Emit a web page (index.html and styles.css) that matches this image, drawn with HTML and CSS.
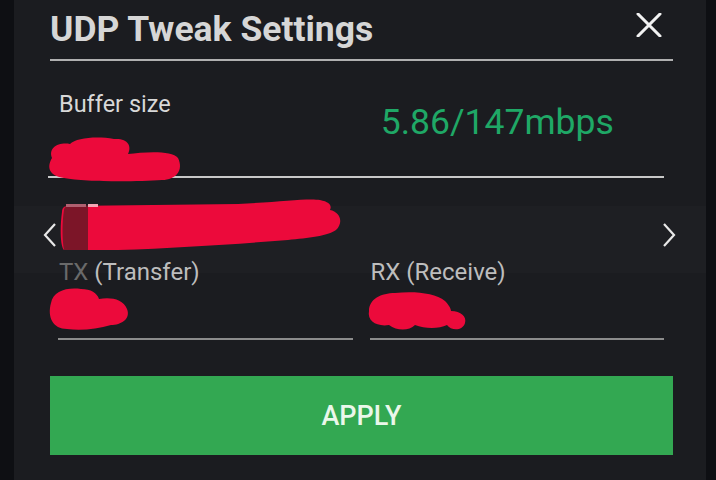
FILE: index.html
```html
<!DOCTYPE html>
<html>
<head>
<meta charset="utf-8">
<link rel="stylesheet" href="styles.css">
</head>
<body>
<div class="dialog">
  <header class="head">
    <h1 class="title">UDP Tweak Settings</h1>
    <svg class="close" width="26" height="24" viewBox="0 0 26 24"><path d="M2 1 L24 23 M24 1 L2 23" stroke="#f2f2f2" stroke-width="3" stroke-linecap="round"/></svg>
  </header>
  <div class="divider"></div>

  <section class="buffer">
    <div class="buffer-top">
      <span class="label">Buffer size</span>
      <span class="speed">5.86/147mbps</span>
    </div>
    <div class="line"></div>
    <svg class="scribble s1" width="140" height="48" viewBox="0 0 140 48"><path d="M8 22 C4 12 14 6 26 8 C32 2 52 0 70 3 C84 2 88 10 84 18 C100 16 128 14 134 22 C140 34 132 44 118 44 C90 46 40 46 20 42 C6 40 2 32 8 22 Z" fill="#ec0a3b"/></svg>
  </section>

  <div class="pager">
    <svg class="arrow" width="14" height="26" viewBox="0 0 14 26"><path d="M12 2 L2 13 L12 24" fill="none" stroke="#e8e8e8" stroke-width="2.2"/></svg>
    <div class="pager-fill"></div>
    <svg class="arrow" width="14" height="26" viewBox="0 0 14 26"><path d="M2 2 L12 13 L2 24" fill="none" stroke="#e8e8e8" stroke-width="2.2"/></svg>
    <svg class="scribble s2" width="284" height="56" viewBox="0 0 284 56"><path d="M4 16 C4 12 6 10 10 10 L180 8 C220 6 250 2 262 4 C272 6 274 10 272 14 C282 16 286 26 278 34 C270 40 250 42 230 44 C180 48 120 52 60 54 L6 54 C2 50 2 30 4 16 Z" fill="#ec0a3b"/><path d="M6 14 C6 12 8 10 12 10 L30 10 L30 54 L6 54 C4 44 4 26 6 14 Z" fill="#7c1528"/><rect x="8" y="8" width="20" height="3" fill="#b06070"/><rect x="30" y="8" width="10" height="3" fill="#f4a6b4"/></svg>
  </div>

  <section class="io">
    <div class="field">
      <span class="label"><span class="dim">TX</span> (Transfer)</span>
      <div class="uline"></div>
    </div>
    <div class="field">
      <span class="label">RX (Receive)</span>
      <div class="uline"></div>
    </div>
    <svg class="scribble s3" width="86" height="48" viewBox="0 0 86 48"><path d="M6 18 C8 6 22 2 36 4 C46 4 52 8 54 14 C66 12 78 14 82 24 C86 34 76 40 66 40 C52 44 36 46 22 44 C8 44 2 32 6 18 Z" fill="#ec0a3b"/></svg>
    <svg class="scribble s4" width="104" height="44" viewBox="0 0 104 44"><path d="M4 22 C4 10 16 4 30 4 C50 2 70 4 80 12 C84 16 86 20 86 22 C96 22 102 28 100 34 C98 42 86 42 82 36 C74 40 60 40 50 36 C44 42 32 42 24 36 C12 38 2 32 4 22 Z" fill="#ec0a3b"/></svg>
  </section>

  <button class="apply">APPLY</button>
</div>
</body>
</html>
```

FILE: styles.css
```css
* { box-sizing: border-box; }
html, body { margin: 0; padding: 0; }
body {
  background: #0e0f13;
  width: 716px;
  height: 480px;
  overflow: hidden;
  font-family: Roboto, "Noto Sans", sans-serif;
}
.dialog {
  margin-left: 14px;
  width: 692px;
  height: 480px;
  background: #1b1c20;
  padding: 0 33px 0 36px;
  position: relative;
}
.head {
  height: 59px;
  display: flex;
  align-items: center;
  justify-content: space-between;
  padding-right: 11px;
}
.title {
  margin: 0;
  font-size: 35.5px;
  font-weight: 700;
  color: #d6d6d6;
  line-height: 40px;
  position: relative;
  top: -1px;
}
.close { position: relative; top: -5px; }
.divider {
  height: 2px;
  background: #b0b0b0;
}
.buffer {
  position: relative;
  height: 117px;
  padding-top: 29px;
  display: flex;
  flex-direction: column;
}
.buffer-top {
  display: flex;
  align-items: flex-start;
  padding-left: 9px;
  height: 86px;
}
.label {
  font-size: 23.5px;
  color: #d8d8d8;
  line-height: 28px;
}
.speed {
  margin-left: 210px;
  margin-top: 12px;
  font-size: 35.5px;
  color: #1fa866;
  line-height: 40px;
}
.line {
  height: 2px;
  background: #c8c8c8;
  margin-left: -2px;
  margin-right: 9px;
}
.scribble { position: absolute; }
.s1 { left: -6px; top: 75px; }
.pager {
  position: relative;
  height: 67px;
  margin: 28px -33px 0 -36px;
  padding: 0 30px 0 29px;
  background: #1e1f23;
  display: flex;
  align-items: center;
  justify-content: space-between;
}
.pager .arrow { margin-top: -10px; }
.s2 { left: 44px; top: -10px; }
.io {
  position: relative;
  display: flex;
  gap: 17px;
  padding-left: 8px;
  padding-right: 9px;
  height: 67px;
}
.field {
  flex: 1;
  display: flex;
  flex-direction: column;
  justify-content: space-between;
}
.io .label {
  font-size: 24px;
  color: #bdbdbd;
  line-height: 28px;
  padding-left: 1px;
  margin-top: -15px;
}
.dim { color: #6a6a6a; }
.uline {
  height: 2px;
  background: #8c8c8c;
}
.s3 { left: -5px; top: 12px; }
.s4 { left: 315px; top: 16px; }
.apply {
  display: block;
  margin-top: 36px;
  width: 623px;
  height: 79px;
  border: none;
  background: #33a852;
  color: #eaf7ea;
  font-family: Roboto, "Noto Sans", sans-serif;
  font-size: 27px;
  font-weight: 500;
  padding: 0;
}
```
